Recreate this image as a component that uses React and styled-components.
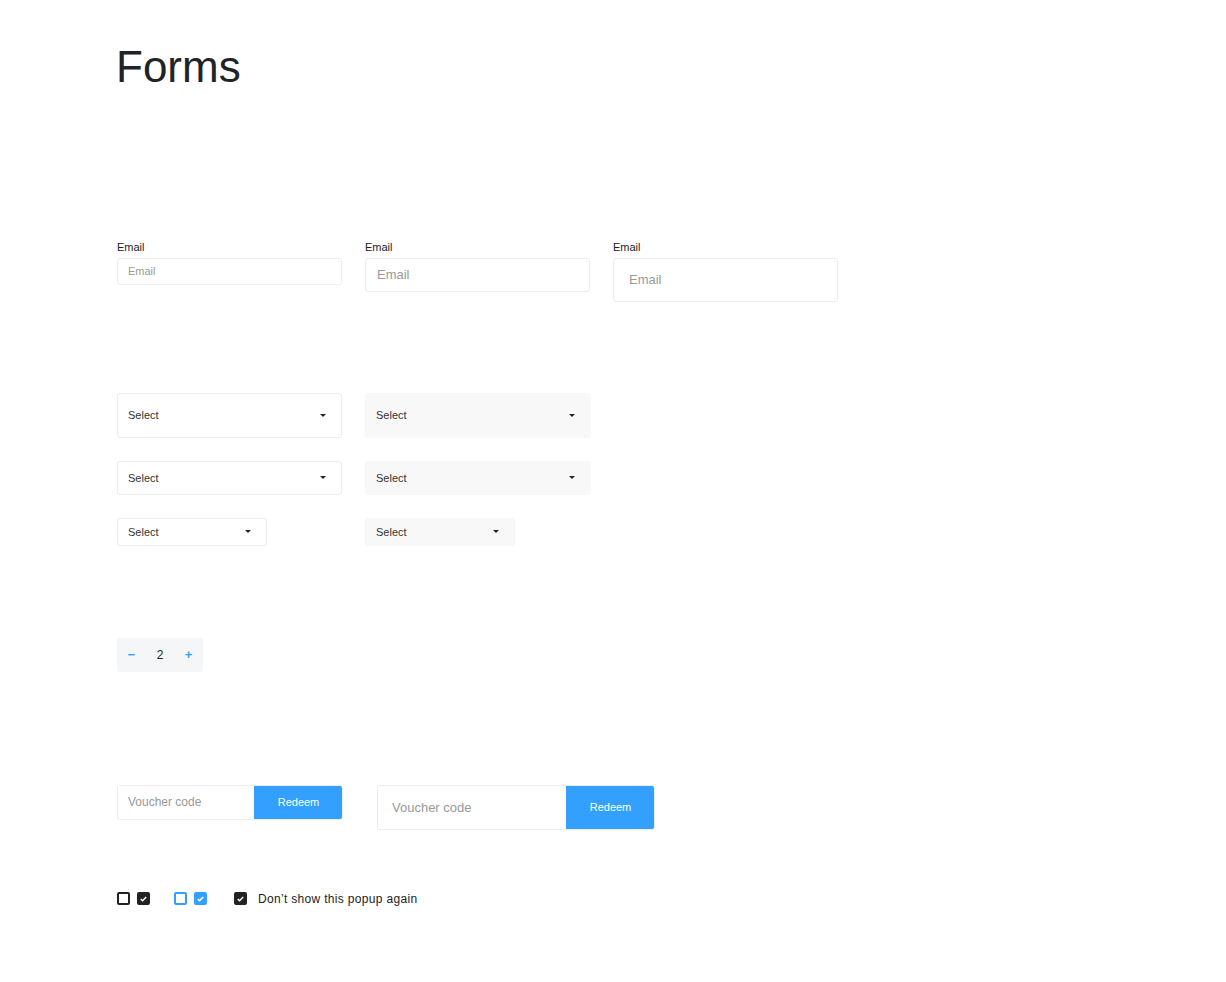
import React from "react";
import styled, { createGlobalStyle } from "styled-components";

const GlobalStyle = createGlobalStyle`
  body {
    margin: 0;
    background: #ffffff;
    font-family: "Liberation Sans", Arial, Helvetica, sans-serif;
    color: #222222;
  }
  * { box-sizing: border-box; }
`;

const Page = styled.div`
  padding: 41px 0 60px 117px;
`;

const Title = styled.h1`
  margin: 0 0 0 -1px;
  font-size: 44px;
  line-height: 1.2;
  font-weight: 400;
  color: #222326;
`;

const FieldRow = styled.div`
  display: flex;
  align-items: flex-start;
  gap: 23px;
  margin-top: 146px;
`;

const Field = styled.div`
  display: flex;
  flex-direction: column;
  width: 225px;
`;

const Label = styled.label`
  font-size: 11px;
  line-height: 13px;
  color: #222;
  padding-top: 1px;
  margin-bottom: 4px;
`;

const sizes = {
  sm: { h: 27, font: 11, pad: 10 },
  md: { h: 34, font: 13, pad: 11 },
  lg: { h: 44, font: 13, pad: 15 },
};

const TextInput = styled.input`
  width: 100%;
  height: ${(p) => sizes[p.$size].h}px;
  padding: 0 ${(p) => sizes[p.$size].pad}px;
  font-family: inherit;
  font-size: ${(p) => sizes[p.$size].font}px;
  border: 1px solid #ececec;
  border-radius: 3px;
  background: #fff;
  outline: none;
  &::placeholder {
    color: #999;
  }
`;

const SelectGrid = styled.div`
  display: grid;
  grid-template-columns: 225px 226px;
  column-gap: 23px;
  row-gap: 23px;
  margin-top: 91px;
  justify-items: start;
`;

const SelectBox = styled.div`
  display: flex;
  align-items: center;
  justify-content: space-between;
  width: ${(p) => p.$width}px;
  height: ${(p) => p.$height}px;
  padding: 0 15px 0 10px;
  font-size: 11px;
  color: #333;
  border-radius: 3px;
  background: ${(p) => (p.$filled ? "#f8f8f8" : "#fff")};
  border: 1px solid ${(p) => (p.$filled ? "#f8f8f8" : "#ececec")};
`;

const Caret = styled.span`
  width: 0;
  height: 0;
  border-left: 3px solid transparent;
  border-right: 3px solid transparent;
  border-top: 3.5px solid #222;
`;

const Stepper = styled.div`
  display: grid;
  grid-template-columns: repeat(3, 1fr);
  align-items: center;
  width: 86px;
  height: 34px;
  margin-top: 92px;
  background: #f5f6f8;
  border-radius: 3px;
  font-size: 12px;
  text-align: center;
`;

const StepButton = styled.span`
  color: #33a0ff;
  font-size: 13px;
  font-weight: 700;
`;

const VoucherRow = styled.div`
  display: flex;
  align-items: flex-start;
  gap: 34px;
  margin-top: 113px;
`;

const Voucher = styled.div`
  display: flex;
  width: ${(p) => p.$width}px;
  height: ${(p) => p.$height}px;
  border-radius: 3px;
  overflow: hidden;
  border: 1px solid #ececec;
`;

const VoucherInput = styled.input`
  flex: 1;
  min-width: 0;
  border: none;
  outline: none;
  padding: 0 ${(p) => p.$pad}px;
  font-family: inherit;
  font-size: ${(p) => p.$font}px;
  &::placeholder {
    color: #999;
  }
`;

const RedeemButton = styled.button`
  width: 89px;
  margin: -1px -1px -1px 0;
  border: none;
  border-radius: 0 3px 3px 0;
  background: #33a0ff;
  color: #fff;
  font-family: inherit;
  font-size: 11px;
  cursor: pointer;
`;

const CheckRow = styled.div`
  display: flex;
  align-items: center;
  margin-top: 62px;
`;

const CheckGroup = styled.div`
  display: flex;
  align-items: center;
  gap: 7px;
  margin-right: ${(p) => p.$gap}px;
`;

const Box = styled.span`
  display: inline-flex;
  align-items: center;
  justify-content: center;
  width: 13px;
  height: 13px;
  border-radius: 2px;
  border: 2px solid ${(p) => (p.$blue ? "#33a0ff" : "#222")};
  background: ${(p) => (p.$checked ? (p.$blue ? "#33a0ff" : "#222") : "#fff")};
`;

const CheckText = styled.span`
  font-size: 12px;
  color: #222;
  margin-left: 11px;
  letter-spacing: 0.32px;
`;

const Checkbox = ({ checked, blue }) => (
  <Box $checked={checked} $blue={blue}>
    {checked && (
      <svg width="7" height="6" viewBox="0 0 7 6">
        <path d="M0.8 3.1 L2.6 4.8 L6.2 1" fill="none" stroke="#fff" strokeWidth="1.5" />
      </svg>
    )}
  </Box>
);

const Select = ({ width = 225, height, filled }) => (
  <SelectBox $width={width} $height={height} $filled={filled}>
    Select
    <Caret />
  </SelectBox>
);

export default function App() {
  return (
    <Page>
      <GlobalStyle />
      <Title>Forms</Title>

      <FieldRow>
        {["sm", "md", "lg"].map((s) => (
          <Field key={s}>
            <Label>Email</Label>
            <TextInput $size={s} placeholder="Email" />
          </Field>
        ))}
      </FieldRow>

      <SelectGrid>
        <Select height={45} />
        <Select height={45} width={226} filled />
        <Select height={34} />
        <Select height={34} width={226} filled />
        <Select height={28} width={150} />
        <Select height={28} width={150} filled />
      </SelectGrid>

      <Stepper>
        <StepButton>−</StepButton>
        <span>2</span>
        <StepButton>+</StepButton>
      </Stepper>

      <VoucherRow>
        <Voucher $width={226} $height={35}>
          <VoucherInput $pad={10} $font={12} placeholder="Voucher code" />
          <RedeemButton>Redeem</RedeemButton>
        </Voucher>
        <Voucher $width={278} $height={45}>
          <VoucherInput $pad={14} $font={13} placeholder="Voucher code" />
          <RedeemButton>Redeem</RedeemButton>
        </Voucher>
      </VoucherRow>

      <CheckRow>
        <CheckGroup $gap={24}>
          <Checkbox />
          <Checkbox checked />
        </CheckGroup>
        <CheckGroup $gap={27}>
          <Checkbox blue />
          <Checkbox blue checked />
        </CheckGroup>
        <Checkbox checked />
        <CheckText>Don’t show this popup again</CheckText>
      </CheckRow>
    </Page>
  );
}
